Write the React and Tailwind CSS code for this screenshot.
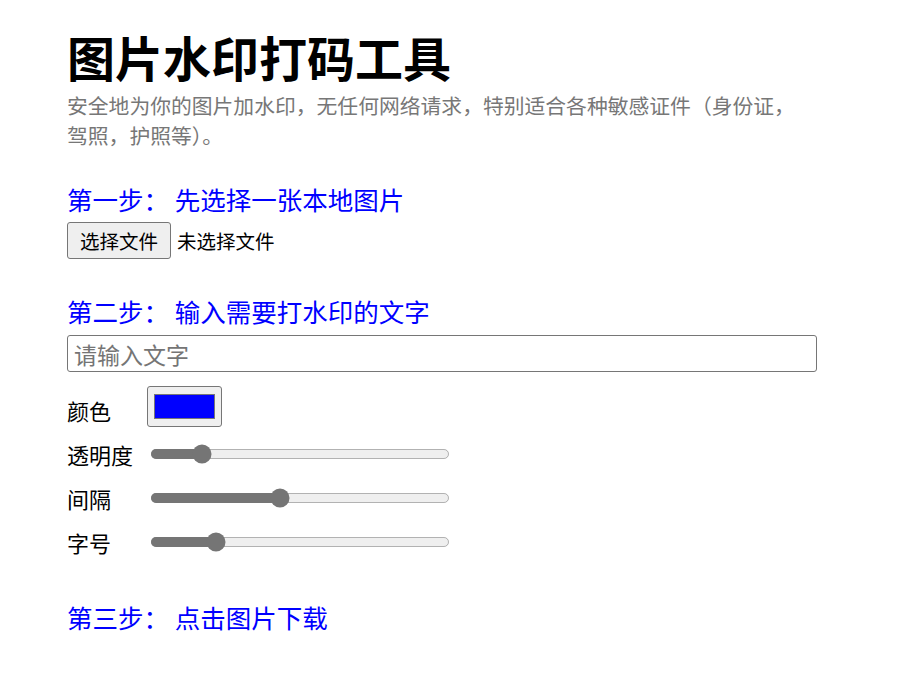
import React from "react";

function SliderRow({ label, value }) {
  return (
    <div className="flex items-center h-[44px]">
      <div className="w-[80px] text-[22px] leading-[30px] text-black">{label}</div>
      <input
        type="range"
        min="0"
        max="100"
        defaultValue={value}
        className="w-[240px] [zoom:1.25] accent-[#757575] m-0 ml-[2px]"
      />
    </div>
  );
}

export default function App() {
  return (
    <div className="min-h-screen bg-white">
      <div className="w-[775px] mx-auto pt-[32px] flex flex-col font-['Noto_Sans_CJK_SC','Noto_Sans',sans-serif]">
        <h1 className="text-[48px] leading-[48px] font-bold text-black">图片水印打码工具</h1>
        <p className="mt-[10px] max-w-[745px] text-[20.8px] leading-[30px] text-[#777777]">
          安全地为你的图片加水印，无任何网络请求，特别适合各种敏感证件（身份证，驾照，护照等）。
        </p>

        <h3 className="mt-[33px] text-[25.5px] leading-[32px] text-[#0000ff]">第一步：&nbsp;先选择一张本地图片</h3>
        <div className="mt-[7px] flex items-center">
          <div className="h-[37px] w-[104px] flex items-center justify-center border border-[#767676] rounded-[3px] bg-[#efefef] text-[19.5px] text-black">
            选择文件
          </div>
          <span className="ml-[6px] text-[19.5px] text-black">未选择文件</span>
        </div>

        <h3 className="mt-[36px] text-[25.5px] leading-[32px] text-[#0000ff]">第二步：&nbsp;输入需要打水印的文字</h3>
        <input
          type="text"
          placeholder="请输入文字"
          className="mt-[8px] w-[750px] h-[37px] border border-[#767676] rounded-[3px] px-[6px] text-[23px] text-black placeholder:text-[#757575] outline-none"
        />

        <div className="mt-[14px] flex items-center h-[41px]">
          <div className="w-[80px] text-[22px] leading-[30px] text-black pt-[6px]">颜色</div>
          <div className="w-[75px] h-[41px] border border-[#767676] rounded-[3px] bg-[#efefef] px-[6px] py-[7px]">
            <div className="w-full h-full bg-[#0000ff] border border-[#777777]"></div>
          </div>
        </div>

        <div className="mt-[5px] flex flex-col">
          <SliderRow label="透明度" value={15} />
          <SliderRow label="间隔" value={43} />
          <SliderRow label="字号" value={20} />
        </div>

        <h3 className="mt-[37px] text-[25.5px] leading-[32px] text-[#0000ff]">第三步：&nbsp;点击图片下载</h3>
      </div>
    </div>
  );
}
